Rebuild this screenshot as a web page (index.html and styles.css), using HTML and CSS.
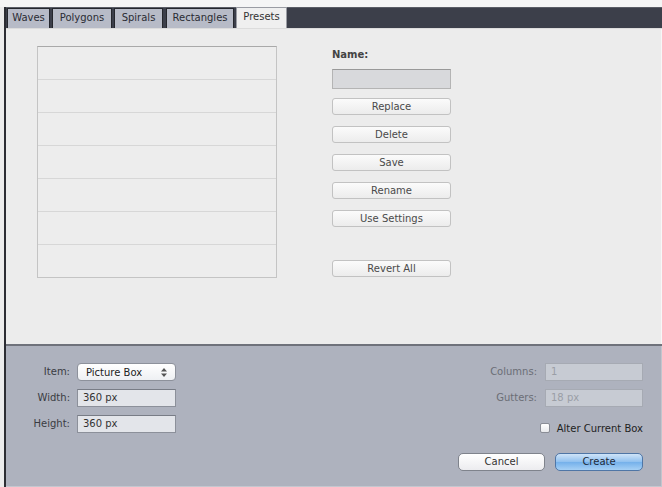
FILE: index.html
```html
<!DOCTYPE html>
<html>
<head>
<meta charset="utf-8">
<link rel="stylesheet" href="styles.css">
</head>
<body>
<div class="screen">
  <div class="topstrip"></div>
  <div class="window">
    <div class="tabbar">
      <div class="tab t-waves">Waves</div>
      <div class="tab t-poly">Polygons</div>
      <div class="tab t-spir">Spirals</div>
      <div class="tab t-rect">Rectangles</div>
      <div class="tab t-pres active">Presets</div>
    </div>
    <div class="content">
      <div class="list">
        <div class="row"></div>
        <div class="row"></div>
        <div class="row"></div>
        <div class="row"></div>
        <div class="row"></div>
        <div class="row"></div>
        <div class="row"></div>
      </div>
      <div class="side">
        <div class="name-label">Name:</div>
        <div class="name-field"></div>
        <div class="btn first">Replace</div>
        <div class="btn">Delete</div>
        <div class="btn">Save</div>
        <div class="btn">Rename</div>
        <div class="btn">Use Settings</div>
        <div class="btn revert">Revert All</div>
      </div>
    </div>
    <div class="bottom">
      <div class="left-form">
        <span class="lbl">Item:</span>
        <div class="select">
          <span>Picture Box</span>
          <svg class="arrows" width="6" height="9" viewBox="0 0 6 9"><path d="M3 0 L6 3.5 L0 3.5 Z M3 9 L6 5.5 L0 5.5 Z" fill="#555"/></svg>
        </div>
        <span class="lbl">Width:</span>
        <div class="field">360 px</div>
        <span class="lbl">Height:</span>
        <div class="field">360 px</div>
      </div>
      <div class="right-form">
        <div class="frow"><span class="lbl dis">Columns:</span><div class="field dis">1</div></div>
        <div class="frow"><span class="lbl dis">Gutters:</span><div class="field dis">18 px</div></div>
        <div class="check"><span class="box"></span><span>Alter Current Box</span></div>
        <div class="actions">
          <div class="pbtn cancel">Cancel</div>
          <div class="pbtn create">Create</div>
        </div>
      </div>
    </div>
  </div>
</div>
</body>
</html>
```
FILE: styles.css
```css
* { box-sizing: border-box; }
html, body { margin: 0; padding: 0; background: #f3f3f3; }
.screen {
  width: 662px; height: 487px; overflow: hidden;
  display: flex; flex-direction: column;
  font-family: "DejaVu Sans", "Noto Sans", sans-serif;
  font-size: 10px; color: #333;
  background: #ececec;
}
.topstrip { height: 7px; background: #f5f5f5; flex: none; }
.window {
  flex: 1; display: flex; flex-direction: column;
  margin-left: 4px; border-left: 2px solid #2c2d33;
}
.tabbar {
  height: 21px; flex: none; background: #3c3f4a;
  border-top: 1px solid #5a5d66;
  display: flex; align-items: flex-end; gap: 2px; padding-left: 1px;
}
.tab {
  height: 20px; line-height: 18px; padding: 0 4px;
  background: #b7bbc7; border: 1px solid #25272d; border-bottom: none;
  color: #2a2c33; font-size: 10px; text-align: center;
}
.t-waves { width: 43px; }
.t-poly { width: 60px; }
.t-spir { width: 49px; }
.t-rect { width: 68px; margin-left: 1px; }
.t-pres { width: 51px; }
.tab.active { background: #efefef; color: #333; border-color: #9a9ca3; height: 21px; }
.content {
  height: 316px; flex: none; background: #ececec;
  border-top: 1px solid #dcdcdc;
  display: flex; padding: 17px 0 0 31px; gap: 55px;
  box-shadow: inset -5px 0 0 -4px #f7f7f7;
}
.list {
  width: 240px; height: 232px;
  border: 1px solid #c4c4c4; border-top-color: #a9a9a9;
  background: #ededed;
}
.row { height: 33px; border-bottom: 1px solid #d7d7d7; }
.row:last-child { border-bottom: none; }
.side { width: 119px; display: flex; flex-direction: column; padding-top: 2px; }
.name-label { height: 13px; line-height: 13px; font-weight: bold; color: #444; font-size: 10px; }
.name-field {
  margin-top: 8px; height: 20px;
  background: #d8d9dc; border: 1px solid #b4b4b4; border-top-color: #999;
}
.btn {
  margin-top: 11px; height: 17px; line-height: 15px; text-align: center;
  background: linear-gradient(#fbfbfb, #ececec);
  border: 1px solid #c2c2c2; border-radius: 3px; color: #4a4a4a;
}
.btn.first { margin-top: 9px; }
.btn.revert { margin-top: 33px; }
.bottom {
  flex: 1; background: #aeb2be;
  border-top: 2px solid #6f727b;
  display: flex; justify-content: space-between;
  padding: 17px 19px 0 0;
  box-shadow: inset 0 -5px 0 -4px #c4c7cf, inset -5px 0 0 -4px #c2c5cd;
}
.left-form {
  display: grid; grid-template-columns: 64px 99px;
  column-gap: 7px; row-gap: 8px; align-content: start; align-items: center;
}
.lbl { text-align: right; color: #3a3c42; height: 18px; line-height: 18px; }
.lbl.dis { color: #6b6e76; }
.field {
  height: 18px; line-height: 16px; padding-left: 5px;
  background: #e3e5ea; border: 1px solid #8c909a; border-top-color: #787c86;
  color: #333;
}
.field.dis { background: #c7cbd3; border-color: #a6aab3; color: #9a9ea6; width: 98px; }
.select {
  height: 18px; display: flex; align-items: center; justify-content: space-between;
  padding: 0 8px 0 8px;
  background: linear-gradient(#ffffff, #eef0f3);
  border: 1px solid #8d919b; border-radius: 4px; color: #222;
}
.arrows { display: block; }
.right-form { display: flex; flex-direction: column; align-items: flex-end; }
.frow { display: flex; gap: 8px; margin-bottom: 8px; }
.check {
  display: flex; align-items: center; gap: 7px; margin-top: 6px;
  height: 14px; color: #222;
}
.box {
  width: 10px; height: 10px; background: linear-gradient(#ffffff, #e8e9ec);
  border: 1px solid #8a8d96; border-radius: 2px;
}
.actions { display: flex; gap: 10px; margin-top: 18px; }
.pbtn {
  height: 18px; line-height: 16px; text-align: center; border-radius: 5px;
}
.cancel {
  width: 87px; background: linear-gradient(#ffffff, #ececef);
  border: 1px solid #7f838c; color: #333;
}
.create {
  width: 88px; background: linear-gradient(#cfe4f8, #8fc0ef 50%, #74b0ea 51%, #a6d0f5);
  border: 1px solid #4f76a6; color: #1d2a3a;
}
```
